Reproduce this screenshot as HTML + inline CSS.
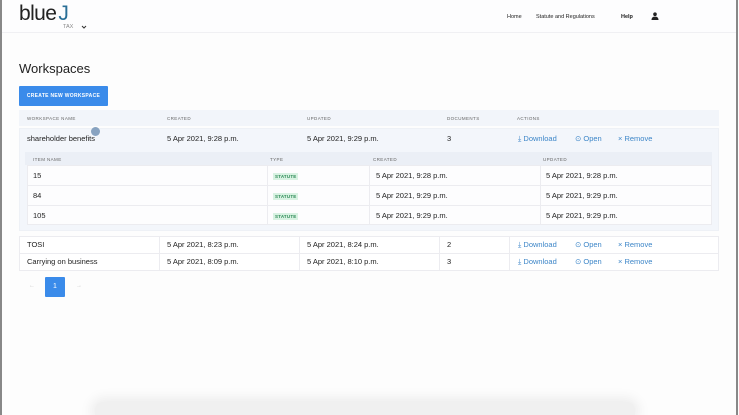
<!DOCTYPE html>
<html style="overflow:hidden;width:739px;height:415px"><head><meta charset="utf-8"><style>
*{margin:0;padding:0;box-sizing:border-box}
body{width:739px;height:415px;overflow:hidden;background:#fdfdfd;font-family:"Liberation Sans",sans-serif;color:#222;position:relative}
.a{position:absolute;white-space:nowrap}
.t{font-size:7.5px;color:#222}
.h{font-size:4.5px;color:#666;letter-spacing:.4px}
.lnk{font-size:7.5px;color:#3d86c8}
.badge{position:absolute;font-size:4.5px;font-weight:bold;color:#2e8b57;background:#d8f2e2;padding:1px 2px;letter-spacing:.2px}
.vl{position:absolute;width:1px;background:#ececf0}
</style></head><body>
<div class="a" style="left:0;top:0;width:2px;height:415px;background:#888"></div>
<div class="a" style="left:736px;top:0;width:2px;height:415px;background:#888"></div>
<div class="a" style="left:2px;top:0;width:734px;height:33px;background:#fdfdfe;border-bottom:1px solid #f0f0f3"></div>
<div class="a" style="left:19px;top:2px;font-size:21px;color:#222;letter-spacing:-.6px;font-weight:300">blue<span style="color:#2a6f97;margin-left:2px">J</span></div>
<div class="a" style="left:63px;top:24px;font-size:5.5px;color:#888">TAX</div>
<svg class="a" style="left:81px;top:25px" width="6" height="4" viewBox="0 0 6 4"><path d="M1 1l2 2 2-2" stroke="#333" fill="none" stroke-width="1"/></svg>
<div class="a" style="left:507px;top:14px;font-size:5.5px">Home</div>
<div class="a" style="left:536px;top:14px;font-size:5.5px">Statute and Regulations</div>
<div class="a" style="left:621px;top:14px;font-size:5.5px;font-weight:bold">Help</div>
<svg class="a" style="left:651px;top:12px" width="8" height="8" viewBox="0 0 8 8"><circle cx="4" cy="2.2" r="1.8" fill="#222"/><path d="M0.5 8c0-2.5 1.5-3.4 3.5-3.4S7.5 5.5 7.5 8z" fill="#222"/></svg>
<div class="a" style="left:19px;top:61px;font-size:13px;color:#222">Workspaces</div>
<div class="a" style="left:19px;top:86px;width:89px;height:20px;background:#3a8bea;border-radius:1px;color:#fff;font-size:5px;font-weight:bold;line-height:20px;text-align:center;letter-spacing:.3px">CREATE NEW WORKSPACE</div>
<div class="a" style="left:19px;top:110px;width:700px;height:16px;background:#f2f5fa"></div>
<div class="a h" style="left:27px;top:116px">WORKSPACE NAME</div>
<div class="a h" style="left:167px;top:116px">CREATED</div>
<div class="a h" style="left:307px;top:116px">UPDATED</div>
<div class="a h" style="left:447px;top:116px">DOCUMENTS</div>
<div class="a h" style="left:517px;top:116px">ACTIONS</div>
<div class="a" style="left:19px;top:128px;width:700px;height:103px;background:#f3f6fb;border:1px solid #eef1f6"></div>
<div class="a t" style="left:27px;top:134px">shareholder benefits</div>
<div class="a" style="left:91px;top:127px;width:9px;height:9px;border-radius:50%;background:#6d8fb3;opacity:.8"></div>
<div class="a t" style="left:167px;top:134px">5 Apr 2021, 9:28 p.m.</div>
<div class="a t" style="left:307px;top:134px">5 Apr 2021, 9:29 p.m.</div>
<div class="a t" style="left:447px;top:134px">3</div>
<div class="a lnk" style="left:518px;top:134px">⤓ Download</div>
<div class="a lnk" style="left:575px;top:134px">⊙ Open</div>
<div class="a lnk" style="left:618px;top:134px">× Remove</div>
<div class="a" style="left:25px;top:152px;width:687px;height:13px;background:#ebeff6"></div>
<div class="a h" style="left:33px;top:157px">ITEM NAME</div>
<div class="a h" style="left:270px;top:157px">TYPE</div>
<div class="a h" style="left:373px;top:157px">CREATED</div>
<div class="a h" style="left:543px;top:157px">UPDATED</div>
<div class="a" style="left:27px;top:165px;width:685px;height:60px;background:#fdfdfe;border:1px solid #ececf0"></div>
<div class="a" style="left:27px;top:185px;width:685px;height:1px;background:#ececf0"></div>
<div class="a" style="left:27px;top:205px;width:685px;height:1px;background:#ececf0"></div>
<div class="vl" style="left:267px;top:165px;height:60px"></div>
<div class="vl" style="left:369px;top:165px;height:60px"></div>
<div class="vl" style="left:540px;top:165px;height:60px"></div>
<div class="a t" style="left:33px;top:171px">15</div>
<div class="a t" style="left:33px;top:191px">84</div>
<div class="a t" style="left:33px;top:211px">105</div>
<div class="badge" style="left:273px;top:173px">STATUTE</div>
<div class="badge" style="left:273px;top:193px">STATUTE</div>
<div class="badge" style="left:273px;top:213px">STATUTE</div>
<div class="a t" style="left:376px;top:171px">5 Apr 2021, 9:28 p.m.</div>
<div class="a t" style="left:376px;top:191px">5 Apr 2021, 9:29 p.m.</div>
<div class="a t" style="left:376px;top:211px">5 Apr 2021, 9:29 p.m.</div>
<div class="a t" style="left:546px;top:171px">5 Apr 2021, 9:28 p.m.</div>
<div class="a t" style="left:546px;top:191px">5 Apr 2021, 9:29 p.m.</div>
<div class="a t" style="left:546px;top:211px">5 Apr 2021, 9:29 p.m.</div>
<div class="a" style="left:19px;top:236px;width:700px;height:35px;background:#fff;border:1px solid #ececf0"></div>
<div class="a" style="left:19px;top:253px;width:700px;height:1px;background:#ececf0"></div>
<div class="vl" style="left:159px;top:236px;height:35px"></div>
<div class="vl" style="left:299px;top:236px;height:35px"></div>
<div class="vl" style="left:439px;top:236px;height:35px"></div>
<div class="vl" style="left:509px;top:236px;height:35px"></div>
<div class="a t" style="left:27px;top:240px">TOSI</div>
<div class="a t" style="left:167px;top:240px">5 Apr 2021, 8:23 p.m.</div>
<div class="a t" style="left:307px;top:240px">5 Apr 2021, 8:24 p.m.</div>
<div class="a t" style="left:447px;top:240px">2</div>
<div class="a lnk" style="left:518px;top:240px">⤓ Download</div>
<div class="a lnk" style="left:575px;top:240px">⊙ Open</div>
<div class="a lnk" style="left:618px;top:240px">× Remove</div>
<div class="a t" style="left:27px;top:257px">Carrying on business</div>
<div class="a t" style="left:167px;top:257px">5 Apr 2021, 8:09 p.m.</div>
<div class="a t" style="left:307px;top:257px">5 Apr 2021, 8:10 p.m.</div>
<div class="a t" style="left:447px;top:257px">3</div>
<div class="a lnk" style="left:518px;top:257px">⤓ Download</div>
<div class="a lnk" style="left:575px;top:257px">⊙ Open</div>
<div class="a lnk" style="left:618px;top:257px">× Remove</div>
<div class="a" style="left:29px;top:283px;font-size:6px;color:#ccc">←</div>
<div class="a" style="left:45px;top:277px;width:20px;height:20px;background:#3a8bea;border-radius:1px;color:#fff;font-size:7px;line-height:20px;text-align:center">1</div>
<div class="a" style="left:76px;top:283px;font-size:6px;color:#ccc">→</div>
<div class="a" style="left:95px;top:402px;width:540px;height:13px;border-radius:8px 8px 0 0;box-shadow:0 0 12px 4px rgba(0,0,0,.07);background:#f0f0f0"></div>
</body></html>
